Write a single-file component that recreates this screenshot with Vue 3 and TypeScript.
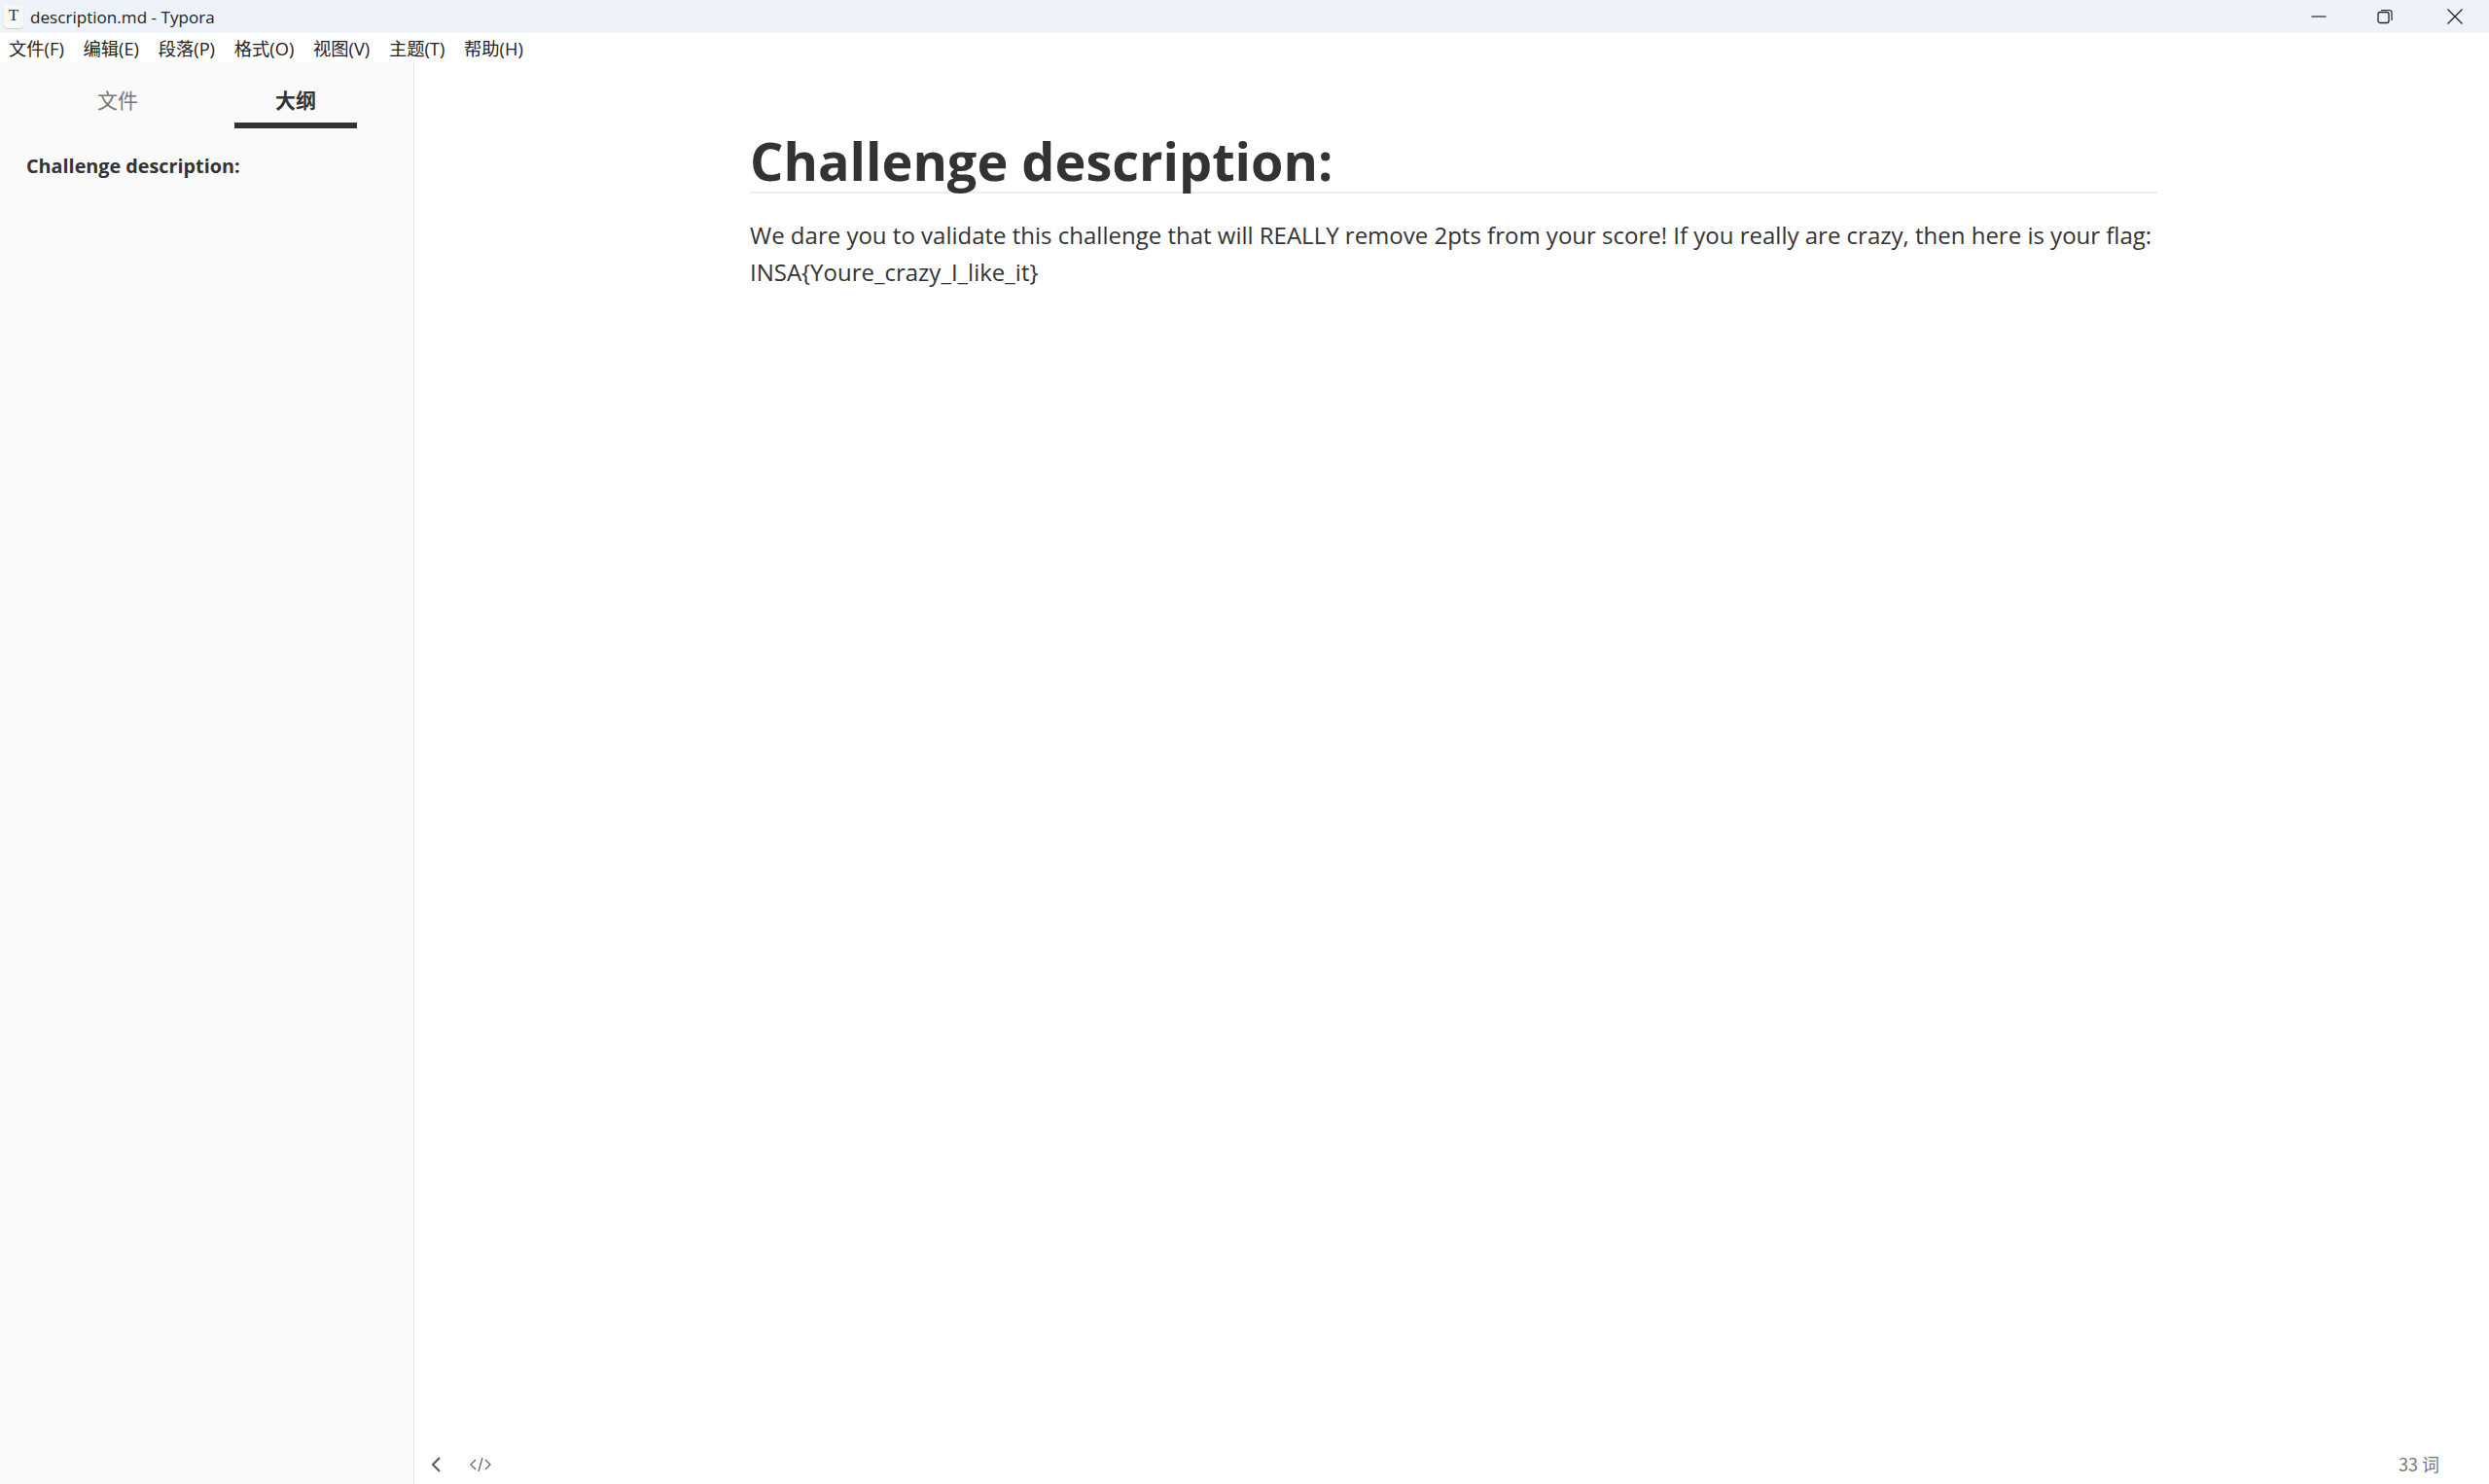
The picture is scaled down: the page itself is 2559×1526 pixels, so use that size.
<script setup lang="ts">
const menus: string[] = ['文件(F)', '编辑(E)', '段落(P)', '格式(O)', '视图(V)', '主题(T)', '帮助(H)']
</script>

<template>
  <div class="window">
    <header class="titlebar">
      <div class="app-icon">T</div>
      <span class="title">description.md - Typora</span>
      <div class="controls">
        <svg class="ctl" width="16" height="16" viewBox="0 0 16 16"><path d="M0.5 8H15.5" stroke="#222" stroke-width="1.2" fill="none"/></svg>
        <svg class="ctl" width="16" height="16" viewBox="0 0 16 16"><rect x="1" y="3.5" width="11" height="11" rx="2" stroke="#222" stroke-width="1.3" fill="none"/><path d="M4 1.5H12.5A2.5 2.5 0 0 1 15 4V12" stroke="#222" stroke-width="1.2" fill="none"/></svg>
        <svg class="ctl close" width="16" height="16" viewBox="0 0 16 16"><path d="M0.5 0.5L15.5 15.5M15.5 0.5L0.5 15.5" stroke="#222" stroke-width="1.3" fill="none"/></svg>
      </div>
    </header>
    <nav class="menubar">
      <span v-for="m in menus" :key="m" class="menu">{{ m }}</span>
    </nav>
    <div class="main">
      <aside class="sidebar">
        <div class="tabs">
          <div class="tab">文件</div>
          <div class="tab active">大纲</div>
        </div>
        <div class="outline">Challenge description:</div>
      </aside>
      <section class="editor">
        <article class="doc">
          <h1>Challenge description:</h1>
          <p>We dare you to validate this challenge that will REALLY remove 2pts from your score! If you really are crazy, then here is your flag: INSA{Youre_crazy_I_like_it}</p>
        </article>
        <footer class="status">
          <svg width="12" height="18" viewBox="0 0 12 18" class="back"><path d="M10 2L3 9L10 16" stroke="#555" stroke-width="2" fill="none"/></svg>
          <svg width="22" height="16" viewBox="0 0 22 16" class="code"><path d="M6 3L1 8L6 13M16 3L21 8L16 13M13 1L9 15" stroke="#666" stroke-width="1.3" fill="none"/></svg>
          <span class="count">33 词</span>
        </footer>
      </section>
    </div>
  </div>
</template>

<style>
html, body { margin: 0; background: #fff; overflow: hidden; }
</style>

<style scoped>
.window {
  width: 2559px;
  height: 1526px;
  display: flex;
  flex-direction: column;
  background: #fff;
  font-family: "Noto Sans CJK SC", "Noto Sans", sans-serif;
}
.titlebar {
  height: 34px;
  flex: none;
  background: #eef3f9;
  display: flex;
  align-items: center;
  padding-left: 4px;
}
.app-icon {
  width: 20px;
  height: 24px;
  border-radius: 4px;
  background: #f8f8f6;
  box-shadow: 0 1px 1px #ccc;
  font-family: "Liberation Serif", serif;
  font-size: 17px;
  line-height: 22px;
  text-align: center;
  color: #333;
}
.title {
  margin-left: 7px;
  font-family: "Open Sans", sans-serif;
  font-size: 17.1px;
  color: #222;
}
.controls {
  margin-left: auto;
  display: flex;
  gap: 52px;
  padding-right: 27px;
}
.controls .ctl { display: block; }
.controls .close { margin-left: 4px; }
.menubar {
  height: 30px;
  flex: none;
  display: flex;
  align-items: center;
  padding-left: 9px;
  gap: 19.7px;
}
.menu {
  font-size: 18.3px;
  color: #222;
  font-family: "Open Sans", "Noto Sans CJK SC", sans-serif;
}
.main {
  flex: 1;
  display: flex;
  min-height: 0;
}
.sidebar {
  width: 425px;
  flex: none;
  background: #fafafa;
  border-right: 1px solid #e8e8e8;
}
.tabs {
  display: flex;
  justify-content: space-between;
  padding: 0 58px;
  height: 68px;
}
.tab {
  width: 126px;
  height: 68px;
  box-sizing: border-box;
  padding-top: 10px;
  text-align: center;
  font-size: 21px;
  line-height: 56px;
  color: #777;
}
.tab.active {
  color: #333;
  font-weight: 700;
  border-bottom: 6px solid #333;
}
.outline {
  margin: 25px 0 0 27px;
  font-family: "Open Sans", sans-serif;
  font-weight: 700;
  font-size: 19.8px;
  color: #333;
}
.editor {
  flex: 1;
  display: flex;
  flex-direction: column;
  min-width: 0;
}
.doc {
  flex: 1;
  padding: 70px 0 0 345px;
  width: 1447px;
  font-family: "Open Sans", sans-serif;
  color: #333;
}
h1 {
  margin: 0;
  font-size: 54px;
  font-weight: 700;
  line-height: 63px;
  border-bottom: 2px solid #eee;
}
p {
  margin: 23.5px 0 0;
  font-size: 24px;
  line-height: 38px;
}
.status {
  height: 40px;
  flex: none;
  display: flex;
  align-items: center;
  padding: 0 51px 0 16px;
}
.back { margin-right: 29px; }
.count {
  margin-left: auto;
  margin-bottom: 2px;
  font-size: 18px;
  color: #777;
}
</style>
